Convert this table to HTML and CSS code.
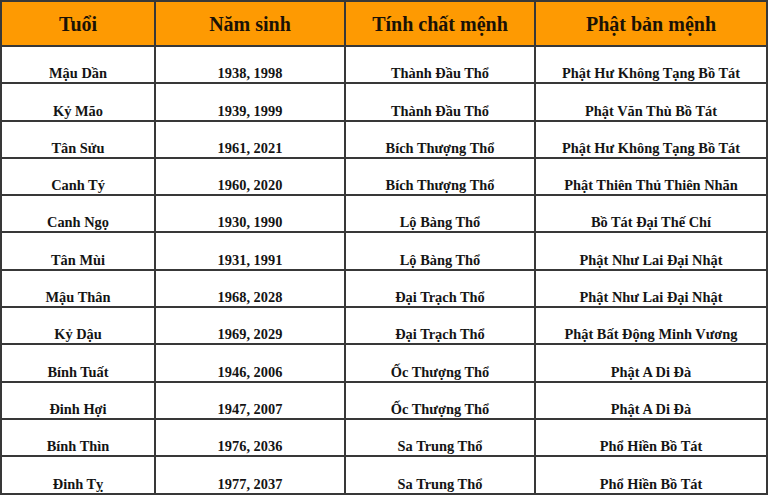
FILE: index.html
```html
<!DOCTYPE html>
<html lang="vi">
<head>
<meta charset="utf-8">
<title>Phật bản mệnh</title>
<link rel="stylesheet" href="styles.css">
</head>
<body>
<table class="menh">
  <colgroup>
    <col class="c1"><col class="c2"><col class="c3"><col class="c4">
  </colgroup>
  <thead>
    <tr><th>Tuổi</th><th>Năm sinh</th><th>Tính chất mệnh</th><th>Phật bản mệnh</th></tr>
  </thead>
  <tbody>
    <tr><td>Mậu Dần</td><td>1938, 1998</td><td>Thành Đầu Thổ</td><td>Phật Hư Không Tạng Bồ Tát</td></tr>
    <tr><td>Kỷ Mão</td><td>1939, 1999</td><td>Thành Đầu Thổ</td><td>Phật Văn Thù Bồ Tát</td></tr>
    <tr><td>Tân Sửu</td><td>1961, 2021</td><td>Bích Thượng Thổ</td><td>Phật Hư Không Tạng Bồ Tát</td></tr>
    <tr><td>Canh Tý</td><td>1960, 2020</td><td>Bích Thượng Thổ</td><td>Phật Thiên Thủ Thiên Nhãn</td></tr>
    <tr><td>Canh Ngọ</td><td>1930, 1990</td><td>Lộ Bàng Thổ</td><td>Bồ Tát Đại Thế Chí</td></tr>
    <tr><td>Tân Mùi</td><td>1931, 1991</td><td>Lộ Bàng Thổ</td><td>Phật Như Lai Đại Nhật</td></tr>
    <tr><td>Mậu Thân</td><td>1968, 2028</td><td>Đại Trạch Thổ</td><td>Phật Như Lai Đại Nhật</td></tr>
    <tr><td>Kỷ Dậu</td><td>1969, 2029</td><td>Đại Trạch Thổ</td><td>Phật Bất Động Minh Vương</td></tr>
    <tr><td>Bính Tuất</td><td>1946, 2006</td><td>Ốc Thượng Thổ</td><td>Phật A Di Đà</td></tr>
    <tr><td>Đinh Hợi</td><td>1947, 2007</td><td>Ốc Thượng Thổ</td><td>Phật A Di Đà</td></tr>
    <tr><td>Bính Thìn</td><td>1976, 2036</td><td>Sa Trung Thổ</td><td>Phổ Hiền Bồ Tát</td></tr>
    <tr><td>Đinh Tỵ</td><td>1977, 2037</td><td>Sa Trung Thổ</td><td>Phổ Hiền Bồ Tát</td></tr>
  </tbody>
</table>
</body>
</html>
```
FILE: styles.css
```css
html, body {
  margin: 0;
  padding: 0;
  background: #ffffff;
}

body {
  font-family: "Liberation Serif", "Times New Roman", serif;
  color: #141414;
}

.menh {
  border-collapse: collapse;
  table-layout: fixed;
  width: 766px;
  margin-left: 0;
}

.menh .c1 { width: 154px; }
.menh .c2 { width: 190px; }
.menh .c3 { width: 190px; }
.menh .c4 { width: 232px; }

.menh th,
.menh td {
  border: 2px solid #383838;
  text-align: center;
  padding: 0;
  font-weight: bold;
}

.menh th {
  background: #fe9a02;
  font-size: 20px;
  height: 43px;
  line-height: 24px;
  vertical-align: middle;
  color: #1a1206;
}

.menh td {
  font-size: 14.4px;
  line-height: 16px;
  height: 34.3px;
  vertical-align: bottom;
  padding-bottom: 1px;
}
```
